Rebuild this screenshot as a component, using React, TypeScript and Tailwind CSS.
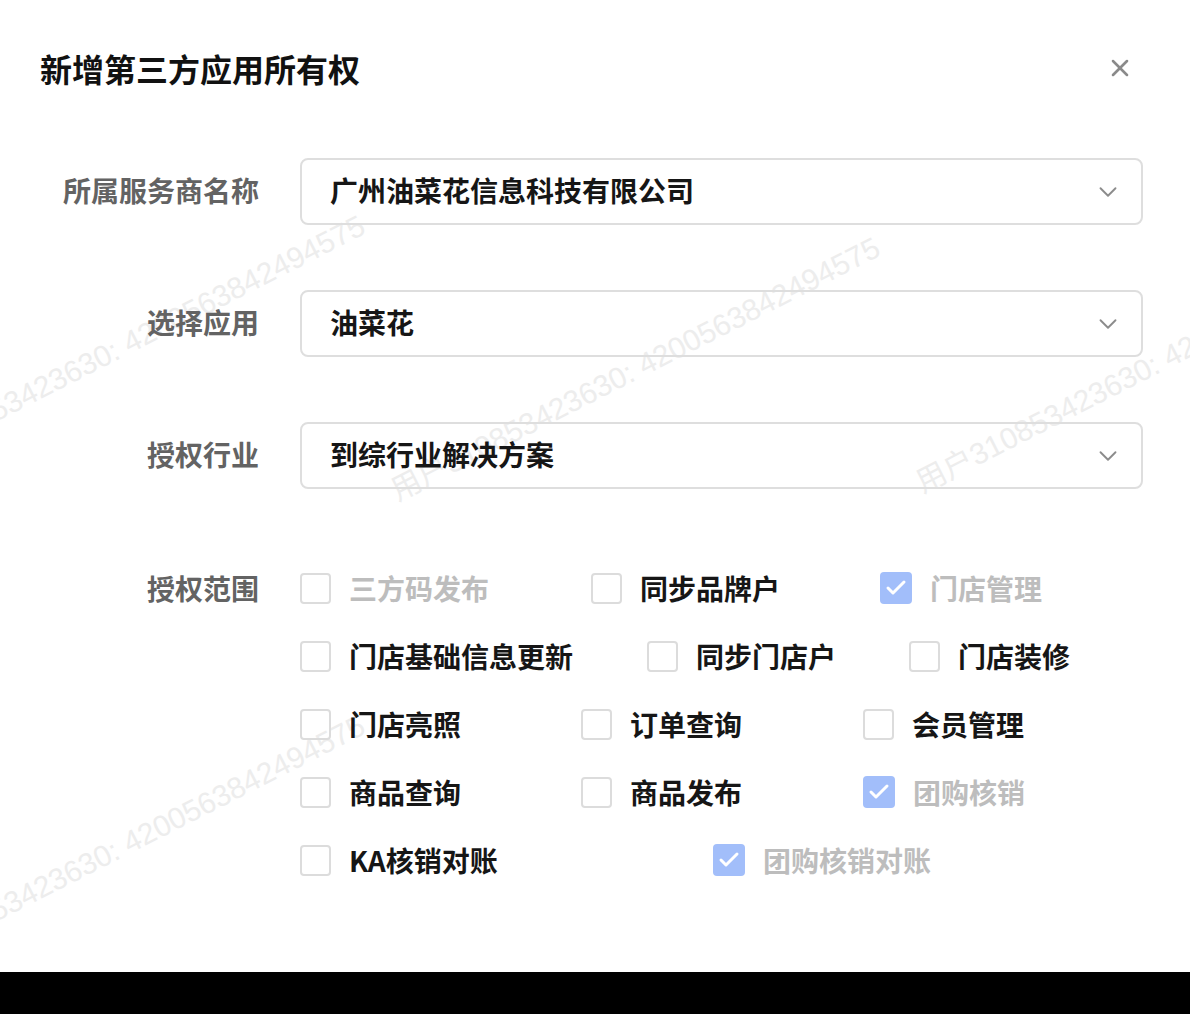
import { ChevronDown, X, Check } from "lucide-react";

const cjk = "font-['PingFang_SC','Noto_Sans_CJK_SC',sans-serif]";

const selects = [
  { label: "所属服务商名称", value: "广州油菜花信息科技有限公司" },
  { label: "选择应用", value: "油菜花" },
  { label: "授权行业", value: "到综行业解决方案" },
];

type Scope = { name: string; checked?: boolean; disabled?: boolean; w: string };

const scopeRows: Scope[][] = [
  [
    { name: "三方码发布", disabled: true, w: "w-[291px]" },
    { name: "同步品牌户", w: "w-[289px]" },
    { name: "门店管理", checked: true, disabled: true, w: "w-[200px]" },
  ],
  [
    { name: "门店基础信息更新", w: "w-[347px]" },
    { name: "同步门店户", w: "w-[262px]" },
    { name: "门店装修", w: "w-[200px]" },
  ],
  [
    { name: "门店亮照", w: "w-[281px]" },
    { name: "订单查询", w: "w-[282px]" },
    { name: "会员管理", w: "w-[200px]" },
  ],
  [
    { name: "商品查询", w: "w-[281px]" },
    { name: "商品发布", w: "w-[282px]" },
    { name: "团购核销", checked: true, disabled: true, w: "w-[200px]" },
  ],
  [
    { name: "KA核销对账", w: "w-[413px]" },
    { name: "团购核销对账", checked: true, disabled: true, w: "w-[260px]" },
  ],
];

const wmText = "用户310853423630: 4200563842494575";

function Watermark({ className }: { className: string }) {
  return (
    <span
      className={`absolute whitespace-nowrap origin-bottom-left -rotate-[27deg] text-[30px] leading-[30px] text-[#ededed] font-['Liberation_Sans','Noto_Sans_CJK_SC',sans-serif] pointer-events-none ${className}`}
    >
      {wmText}
    </span>
  );
}

function ScopeItem({ item }: { item: Scope }) {
  return (
    <div className={`flex items-center gap-[18px] ${item.w}`}>
      {item.checked ? (
        <span className="w-[32px] h-[32px] rounded-[4px] bg-[#a2befa] flex items-center justify-center shrink-0">
          <Check size={24} strokeWidth={3} className="text-white" />
        </span>
      ) : (
        <span className="w-[31px] h-[31px] rounded-[4px] border-2 border-[#dcdcdc] shrink-0" />
      )}
      <span
        className={`text-[28px] leading-none font-semibold whitespace-nowrap ${
          item.disabled ? "text-[#bdbdbd]" : "text-[#161616]"
        }`}
      >
        {item.name}
      </span>
    </div>
  );
}

export default function App() {
  return (
    <div className={`w-full h-[1014px] bg-black flex flex-col ${cjk}`}>
      <div className="relative h-[972px] bg-white overflow-hidden">
        <Watermark className="left-[-115px] top-[454px]" />
        <Watermark className="left-[400px] top-[476px]" />
        <Watermark className="left-[925px] top-[468px]" />
        <Watermark className="left-[-115px] top-[954px]" />

        <div className="relative">
          <div className="flex items-center justify-between pl-[40px] pr-[56px] pt-[44px] h-[92px]">
            <h1 className="text-[32px] leading-[48px] font-bold text-[#111]">新增第三方应用所有权</h1>
            <X size={28} strokeWidth={2.2} className="text-[#8a8a8a]" />
          </div>

          <div className="pl-[40px] pr-[47px] pt-[66px] flex flex-col gap-[65px]">
            {selects.map((s) => (
              <div key={s.label} className="flex items-center gap-[41px]">
                <label className="w-[219px] text-right text-[28px] leading-[40px] pb-[3px] font-semibold text-[#636363] whitespace-nowrap">
                  {s.label}
                </label>
                <div className="flex-1 h-[67px] border-2 border-[#dedede] rounded-[8px] flex items-center justify-between pl-[28px] pr-[18px]">
                  <span className="text-[28px] leading-[40px] pb-[3px] font-semibold text-[#161616]">{s.value}</span>
                  <ChevronDown size={30} strokeWidth={1.5} className="text-[#8c8c8c]" />
                </div>
              </div>
            ))}

            <div className="flex gap-[41px]">
              <div className="w-[219px] h-[68px] flex items-center justify-end text-[28px] font-semibold text-[#636363]">
                授权范围
              </div>
              <div className="flex flex-col">
                {scopeRows.map((row, i) => (
                  <div key={i} className="h-[68px] flex items-center">
                    {row.map((item) => (
                      <ScopeItem key={item.name} item={item} />
                    ))}
                  </div>
                ))}
              </div>
            </div>
          </div>
        </div>
      </div>
    </div>
  );
}
